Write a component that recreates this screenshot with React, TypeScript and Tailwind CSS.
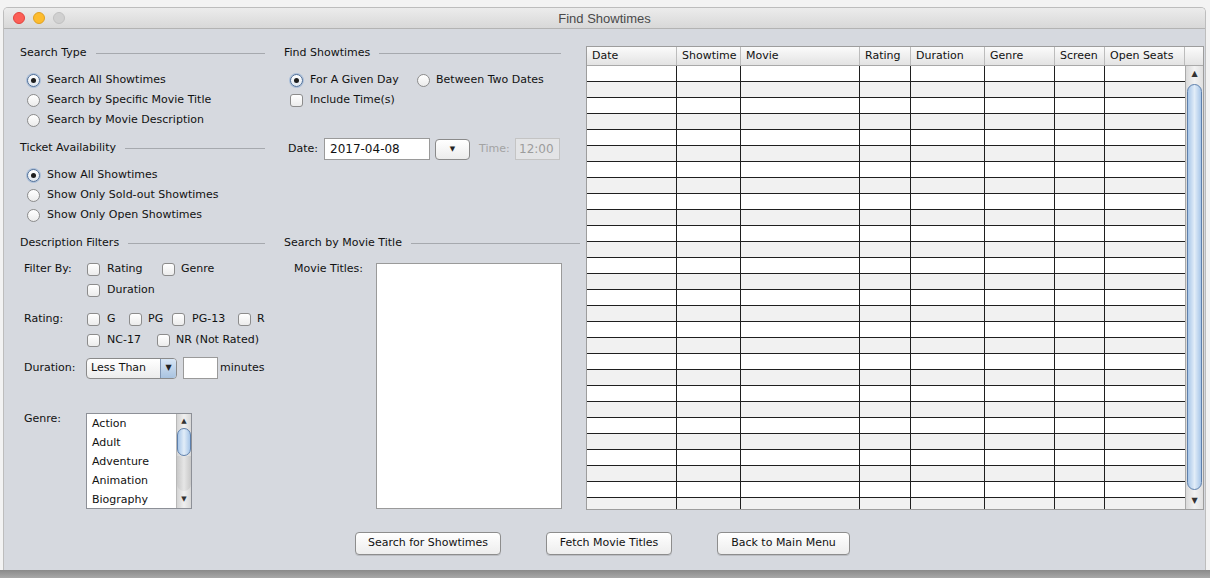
import React from "react";

const F = { fontFamily: '"DejaVu Sans", Verdana, sans-serif' };

function Heading({ text, lineClass = "" }: { text: string; lineClass?: string }) {
  return (
    <div className="flex items-center h-[20px] text-[11px] text-[#111]">
      <span className="whitespace-nowrap">{text}</span>
      <div className={"flex-1 h-px bg-[#a6a9ae] ml-[9px] " + lineClass} />
    </div>
  );
}

function Radio({ checked = false }: { checked?: boolean }) {
  return checked ? (
    <div className="w-[13px] h-[13px] shrink-0 rounded-full border border-[#4f6f99] bg-gradient-to-b from-[#ffffff] to-[#dfe6ee] shadow-[0_0_0_1px_rgba(120,160,210,0.45)] flex items-center justify-center">
      <div className="w-[5px] h-[5px] rounded-full bg-[#1e1e1e]" />
    </div>
  ) : (
    <div className="w-[13px] h-[13px] shrink-0 rounded-full border border-[#8c8c8c] bg-gradient-to-b from-[#ffffff] to-[#ececec]" />
  );
}

function Check() {
  return (
    <div className="w-[13px] h-[13px] shrink-0 rounded-[3px] border border-[#8c8c8c] bg-gradient-to-b from-[#ffffff] to-[#ececec]" />
  );
}

function RadioRow({ label, checked = false }: { label: string; checked?: boolean }) {
  return (
    <div className="flex items-center h-[20px] pl-[7px] gap-[7px] text-[11px] text-[#111]">
      <Radio checked={checked} />
      <span className="whitespace-nowrap">{label}</span>
    </div>
  );
}

function CheckItem({ label, w, gap = 7 }: { label: string; w?: string; gap?: number }) {
  return (
    <div className={"flex items-center h-[20px] text-[11px] text-[#111] " + (w || "")}>
      <Check />
      <span className={"whitespace-nowrap " + (gap === 6 ? "ml-[6px]" : "ml-[7px]")}>{label}</span>
    </div>
  );
}

function Button({ label, w }: { label: string; w: string }) {
  return (
    <div
      className={
        "h-[23px] rounded-[4px] border border-[#8d8d8d] bg-gradient-to-b from-[#ffffff] to-[#ededed] shadow-[0_1px_0_rgba(0,0,0,0.12)] flex items-center justify-center text-[11px] text-[#111] " +
        w
      }
    >
      {label}
    </div>
  );
}

const cols: [string, number][] = [
  ["Date", 91],
  ["Showtime", 64],
  ["Movie", 119],
  ["Rating", 51],
  ["Duration", 74],
  ["Genre", 70],
  ["Screen", 50],
  ["Open Seats", 80],
];

function Table() {
  const rows = Array.from({ length: 28 });
  return (
    <div className="w-[618px] h-[464px] border border-[#9d9d9d] bg-white flex flex-col text-[11px] text-[#111]">
      <div className="flex h-[19px] shrink-0 bg-gradient-to-b from-[#fbfbfb] to-[#e3e3e3] border-b border-[#a9a9a9]">
        {cols.map(([c, w], i) => (
          <div
            key={c}
            style={{ width: w - (i === 0 ? 1 : 0) }}
            className="h-full border-r border-[#bcbcbc] pl-[5px] flex items-center whitespace-nowrap overflow-hidden"
          >
            {c}
          </div>
        ))}
        <div className="flex-1" />
      </div>
      <div className="flex flex-1 overflow-hidden">
        <div className="w-[598px] overflow-hidden">
          {rows.map((_, r) => (
            <div
              key={r}
              className={"flex h-[16px] border-b border-[#1f1f1f] " + (r % 2 === 1 ? "bg-[#f1f1f1]" : "bg-white")}
            >
              {cols.map(([c, w], i) => (
                <div
                  key={c}
                  style={{ width: w - (i === 0 ? 1 : 0) }}
                  className={"h-full " + (i < cols.length - 1 ? "border-r border-[#1f1f1f]" : "")}
                />
              ))}
            </div>
          ))}
        </div>
        <div className="flex-1 flex flex-col bg-gradient-to-r from-[#dadada] via-[#f2f2f2] to-[#e0e0e0] border-l border-[#a9a9a9]">
          <div className="h-[16px] flex items-center justify-center text-[8px] text-[#333]">▲</div>
          <div className="flex-1 mx-[1px] my-[2px] rounded-[8px] border border-[#5d7fab] bg-gradient-to-r from-[#a8c6e8] via-[#e2edf8] to-[#a8c6e8]" />
          <div className="h-[17px] flex items-center justify-center text-[8px] text-[#333]">▼</div>
        </div>
      </div>
    </div>
  );
}

export default function App() {
  return (
    <div style={F} className="w-[1210px] h-[578px] bg-[#f3f3f3] flex flex-col overflow-hidden">
      <div className="ml-[3px] mt-[7px] w-[1203px] h-[563px] flex flex-col rounded-t-[5px] border-x border-t border-[#bdbdbd] overflow-hidden shrink-0">
        {/* title bar */}
        <div className="h-[21px] shrink-0 bg-gradient-to-b from-[#ececec] to-[#d8d8d8] border-b border-[#b3b3b3] flex items-center">
          <div className="flex items-center gap-[8px] pl-[9px] w-[61px]">
            <div className="w-[12px] h-[12px] shrink-0 rounded-full bg-[#fc5f57] border border-[#e0443e]" />
            <div className="w-[12px] h-[12px] shrink-0 rounded-full bg-[#fdbc2e] border border-[#dea123]" />
            <div className="w-[12px] h-[12px] shrink-0 rounded-full bg-[#d0d0d0] border border-[#c0c0c0]" />
          </div>
          <div className="flex-1 text-center text-[#4a4a4a] pr-[61px] pt-[1px]" style={{ fontFamily: '"Liberation Sans", Arial, sans-serif', fontSize: 13 }}>
            Find Showtimes
          </div>
        </div>
        {/* body */}
        <div className="flex-1 bg-[#d6d9df] flex flex-col">
          <div className="flex">
            {/* left column */}
            <div className="w-[245px] shrink-0 ml-[16px] pt-[14px] flex flex-col">
              <Heading text="Search Type" />
              <div className="mt-[7px]">
                <RadioRow label="Search All Showtimes" checked />
                <RadioRow label="Search by Specific Movie Title" />
                <RadioRow label="Search by Movie Description" />
              </div>
              <div className="mt-[8px]">
                <Heading text="Ticket Availability" />
              </div>
              <div className="mt-[7px]">
                <RadioRow label="Show All Showtimes" checked />
                <RadioRow label="Show Only Sold-out Showtimes" />
                <RadioRow label="Show Only Open Showtimes" />
              </div>
              <div className="mt-[8px]">
                <Heading text="Description Filters" />
              </div>
              <div className="mt-[6px] flex pl-[4px] text-[11px] text-[#111]">
                <div className="w-[63px] h-[20px] flex items-center">Filter By:</div>
                <div className="flex flex-col">
                  <div className="flex">
                    <CheckItem label="Rating" w="w-[75px]" />
                    <CheckItem label="Genre" gap={6} />
                  </div>
                  <div className="pt-[1px]">
                    <CheckItem label="Duration" />
                  </div>
                </div>
              </div>
              <div className="mt-[9px] flex pl-[4px] text-[11px] text-[#111]">
                <div className="w-[63px] h-[20px] flex items-center">Rating:</div>
                <div className="flex flex-col">
                  <div className="flex">
                    <CheckItem label="G" w="w-[42px]" />
                    <CheckItem label="PG" w="w-[43px]" gap={6} />
                    <CheckItem label="PG-13" w="w-[66px]" />
                    <CheckItem label="R" gap={6} />
                  </div>
                  <div className="flex pt-[1px]">
                    <CheckItem label="NC-17" w="w-[70px]" />
                    <CheckItem label="NR (Not Rated)" gap={6} />
                  </div>
                </div>
              </div>
              <div className="mt-[7px] flex items-center pl-[4px] text-[11px] text-[#111] h-[22px]">
                <div className="w-[62px]">Duration:</div>
                <div className="w-[91px] h-[21px] rounded-[4px] border border-[#8a8a8a] bg-gradient-to-b from-[#ffffff] to-[#ececec] flex items-center overflow-hidden">
                  <span className="pl-[4px] flex-1">Less Than</span>
                  <div className="w-[16px] h-full border-l border-[#7f95b3] bg-gradient-to-b from-[#d8e6f5] to-[#a9c3e0] flex items-center justify-center text-[8px] text-[#222]">▼</div>
                </div>
                <div className="ml-[6px] w-[35px] h-[22px] bg-white border border-[#9a9a9a]" />
                <span className="ml-[2px]">minutes</span>
              </div>
              <div className="mt-[34px] flex pl-[4px] text-[11px] text-[#111]">
                <div className="w-[62px] leading-[12px]">Genre:</div>
                <div className="w-[106px] h-[96px] bg-white border border-[#8d9097] flex overflow-hidden">
                  <div className="flex-1 pl-[5px] pt-[1px] flex flex-col">
                    {["Action", "Adult", "Adventure", "Animation", "Biography"].map((g) => (
                      <div key={g} className="h-[19px] shrink-0 flex items-center">
                        {g}
                      </div>
                    ))}
                  </div>
                  <div className="w-[15px] flex flex-col bg-gradient-to-r from-[#d4d4d4] via-[#f0f0f0] to-[#d8d8d8] border-l border-[#b8b8b8]">
                    <div className="h-[14px] shrink-0 flex items-center justify-center text-[7px] text-[#333]">▲</div>
                    <div className="h-[28px] shrink-0 rounded-[8px] border border-[#5d7fab] bg-gradient-to-r from-[#a8c6e8] via-[#e2edf8] to-[#a8c6e8]" />
                    <div className="flex-1 rounded-b-[7px] bg-gradient-to-r from-[#c8c8c8] via-[#e6e6e6] to-[#c8c8c8]" />
                    <div className="h-[17px] shrink-0 flex items-center justify-center text-[7px] text-[#333]">▼</div>
                  </div>
                </div>
              </div>
            </div>
            {/* middle column */}
            <div className="w-[296px] shrink-0 ml-[19px] pt-[14px] flex flex-col">
              <div className="mr-[19px]">
                <Heading text="Find Showtimes" lineClass="ml-[8px]" />
              </div>
              <div className="mt-[7px] flex items-center h-[20px] pl-[6px] text-[11px] text-[#111]">
                <div className="w-[127px] flex items-center gap-[7px]">
                  <Radio checked />
                  <span className="whitespace-nowrap">For A Given Day</span>
                </div>
                <div className="flex items-center gap-[6px]">
                  <Radio />
                  <span className="whitespace-nowrap">Between Two Dates</span>
                </div>
              </div>
              <div className="pl-[6px]">
                <CheckItem label="Include Time(s)" />
              </div>
              <div className="mt-[28px] flex items-center h-[22px] pl-[4px] text-[11px] text-[#111]">
                <span className="w-[36px]">Date:</span>
                <div className="w-[106px] h-[22px] bg-white border border-[#9a9a9a] flex items-center pl-[5px] text-[12px]">2017-04-08</div>
                <div className="ml-[5px] w-[35px] h-[21px] rounded-[4px] border border-[#8a8a8a] bg-gradient-to-b from-[#ffffff] to-[#ececec] flex items-center justify-center text-[7px] text-[#222]">▼</div>
                <span className="ml-[9px] w-[36px] text-[#a3a3a3]">Time:</span>
                <div className="w-[45px] h-[22px] bg-[#e3e4e6] border border-[#c4c4c4] flex items-center pl-[3px] text-[12px] text-[#9c9c9c]">12:00</div>
              </div>
              <div className="mt-[73px]">
                <Heading text="Search by Movie Title" lineClass="ml-[9px]" />
              </div>
              <div className="mt-[10px] flex text-[11px] text-[#111] pl-[10px]">
                <div className="w-[82px] leading-[11px]">Movie Titles:</div>
                <div className="w-[186px] h-[246px] bg-white border border-[#9a9a9a]" />
              </div>
            </div>
            {/* table */}
            <div className="ml-[6px] pt-[17px] shrink-0">
              <Table />
            </div>
          </div>
          <div className="mt-[22px] flex justify-center gap-[45px] pr-[4px]">
            <Button label="Search for Showtimes" w="w-[146px]" />
            <Button label="Fetch Movie Titles" w="w-[126px]" />
            <Button label="Back to Main Menu" w="w-[133px]" />
          </div>
        </div>
      </div>
      <div className="flex-1 bg-gradient-to-b from-[#8a8a8a] to-[#a8a8a8]" />
    </div>
  );
}
